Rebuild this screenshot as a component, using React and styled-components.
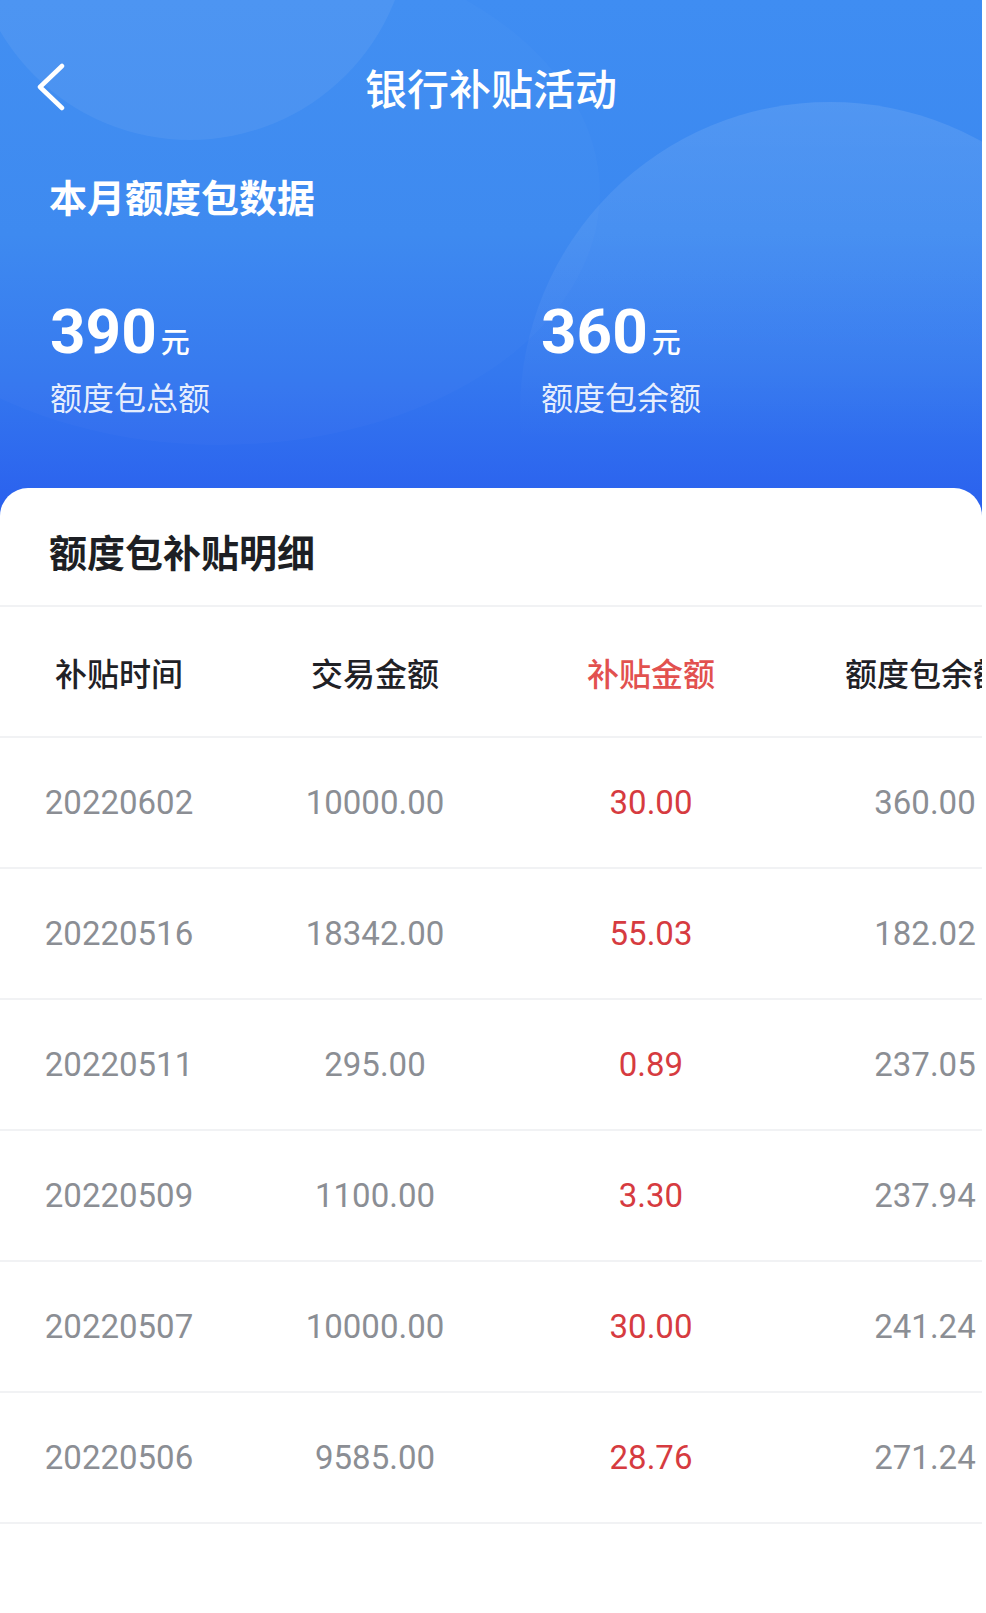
import React from "react";
import styled, { createGlobalStyle } from "styled-components";

const GlobalStyle = createGlobalStyle`
  html, body {
    margin: 0;
    padding: 0;
    background: #ffffff;
  }
  body {
    font-family: "Noto Sans CJK SC", "Noto Sans", Roboto, sans-serif;
    -webkit-font-smoothing: antialiased;
  }
  * { box-sizing: border-box; }
`;

const Page = styled.div`
  width: 982px;
  min-height: 1613px;
  background: #ffffff;
  overflow: hidden;
`;

const Hero = styled.header`
  position: relative;
  overflow: hidden;
  padding: 40px 0 102px;
  background: linear-gradient(180deg, #3f8df2 0%, #3b88f0 45%, #3478ef 72%, #2a5fee 100%);

  &::before {
    content: "";
    position: absolute;
    left: -30px;
    top: -300px;
    width: 440px;
    height: 440px;
    border-radius: 50%;
    background: rgba(255, 255, 255, 0.06);
  }

  &::after {
    content: "";
    position: absolute;
    left: 520px;
    top: 102px;
    width: 620px;
    height: 620px;
    border-radius: 50%;
    background: linear-gradient(180deg, rgba(255, 255, 255, 0.1) 0%, rgba(255, 255, 255, 0.05) 30%, rgba(255, 255, 255, 0) 55%);
  }
`;

const Glow = styled.div`
  position: absolute;
  left: -160px;
  top: -60px;
  width: 760px;
  height: 505px;
  border-radius: 50%;
  background: rgba(255, 255, 255, 0.018);
  pointer-events: none;
`;

const HeroInner = styled.div`
  position: relative;
  z-index: 1;
`;

const NavBar = styled.nav`
  display: grid;
  grid-template-columns: 1fr auto 1fr;
  align-items: center;
  height: 94px;
`;

const BackButton = styled.button`
  justify-self: start;
  display: flex;
  align-items: center;
  padding: 0 0 0 36px;
  border: 0;
  background: transparent;
  cursor: pointer;
`;

const NavTitle = styled.h1`
  margin: 0;
  font-size: 42px;
  font-weight: 500;
  color: #ffffff;
  letter-spacing: 0;
  line-height: 56px;
`;

const SectionTitle = styled.h2`
  margin: 36px 0 0 49px;
  font-size: 38px;
  line-height: 52px;
  font-weight: 600;
  color: #ffffff;
`;

const Stats = styled.div`
  display: grid;
  grid-template-columns: 491px 1fr;
  padding-left: 50px;
  margin-top: 79px;
`;

const Stat = styled.div`
  display: flex;
  flex-direction: column;
  gap: 11px;
`;

const Amount = styled.div`
  display: flex;
  align-items: baseline;
  gap: 4px;
  color: #ffffff;
`;

const AmountValue = styled.span`
  font-family: Roboto, "Liberation Sans", sans-serif;
  font-size: 62px;
  font-weight: 700;
  line-height: 62px;
`;

const AmountUnit = styled.span`
  font-size: 29px;
  font-weight: 500;
  line-height: 32px;
`;

const StatLabel = styled.div`
  font-size: 32px;
  line-height: 44px;
  color: rgba(255, 255, 255, 0.9);
`;

const Card = styled.section`
  position: relative;
  z-index: 2;
  margin-top: -32px;
  background: #ffffff;
  border-radius: 28px 28px 0 0;
`;

const CardTitle = styled.h3`
  display: flex;
  align-items: center;
  height: 119px;
  margin: 0;
  padding: 8px 0 0 49px;
  font-size: 38px;
  font-weight: 700;
  color: #1d1f24;
  border-bottom: 2px solid #f1f2f4;
`;

const TableWrap = styled.div`
  overflow: hidden;
`;

const Row = styled.div`
  display: grid;
  grid-template-columns: 238px 274px 278px 270px;
  width: 1060px;
  height: 131px;
  align-items: center;
  justify-items: center;
  border-bottom: 2px solid #f1f2f4;
`;

const HeadCell = styled.div`
  font-size: 32px;
  font-weight: 500;
  white-space: nowrap;
  color: ${(p) => (p.$accent ? "#e2514f" : "#1f2126")};
`;

const Cell = styled.div`
  font-family: Roboto, "Liberation Sans", sans-serif;
  font-size: 33px;
  font-weight: 400;
  white-space: nowrap;
  color: ${(p) => (p.$accent ? "#d63b40" : "#8b8e94")};
`;

const rows = [
  ["20220602", "10000.00", "30.00", "360.00"],
  ["20220516", "18342.00", "55.03", "182.02"],
  ["20220511", "295.00", "0.89", "237.05"],
  ["20220509", "1100.00", "3.30", "237.94"],
  ["20220507", "10000.00", "30.00", "241.24"],
  ["20220506", "9585.00", "28.76", "271.24"],
];

const ChevronLeft = () => (
  <svg width="30" height="48" viewBox="0 0 30 48" fill="none">
    <path
      d="M26 3 L4 24 L26 45"
      stroke="#ffffff"
      strokeWidth="4.5"
      strokeLinecap="round"
      strokeLinejoin="round"
    />
  </svg>
);

export default function App() {
  return (
    <Page>
      <GlobalStyle />
      <Hero>
        <Glow />
        <HeroInner>
          <NavBar>
            <BackButton aria-label="返回">
              <ChevronLeft />
            </BackButton>
            <NavTitle>银行补贴活动</NavTitle>
            <span />
          </NavBar>
          <SectionTitle>本月额度包数据</SectionTitle>
          <Stats>
            <Stat>
              <Amount>
                <AmountValue>390</AmountValue>
                <AmountUnit>元</AmountUnit>
              </Amount>
              <StatLabel>额度包总额</StatLabel>
            </Stat>
            <Stat>
              <Amount>
                <AmountValue>360</AmountValue>
                <AmountUnit>元</AmountUnit>
              </Amount>
              <StatLabel>额度包余额</StatLabel>
            </Stat>
          </Stats>
        </HeroInner>
      </Hero>
      <Card>
        <CardTitle>额度包补贴明细</CardTitle>
        <TableWrap>
          <Row>
            <HeadCell>补贴时间</HeadCell>
            <HeadCell>交易金额</HeadCell>
            <HeadCell $accent>补贴金额</HeadCell>
            <HeadCell>额度包余额</HeadCell>
          </Row>
          {rows.map((r) => (
            <Row key={r[0]}>
              <Cell>{r[0]}</Cell>
              <Cell>{r[1]}</Cell>
              <Cell $accent>{r[2]}</Cell>
              <Cell>{r[3]}</Cell>
            </Row>
          ))}
        </TableWrap>
      </Card>
    </Page>
  );
}
